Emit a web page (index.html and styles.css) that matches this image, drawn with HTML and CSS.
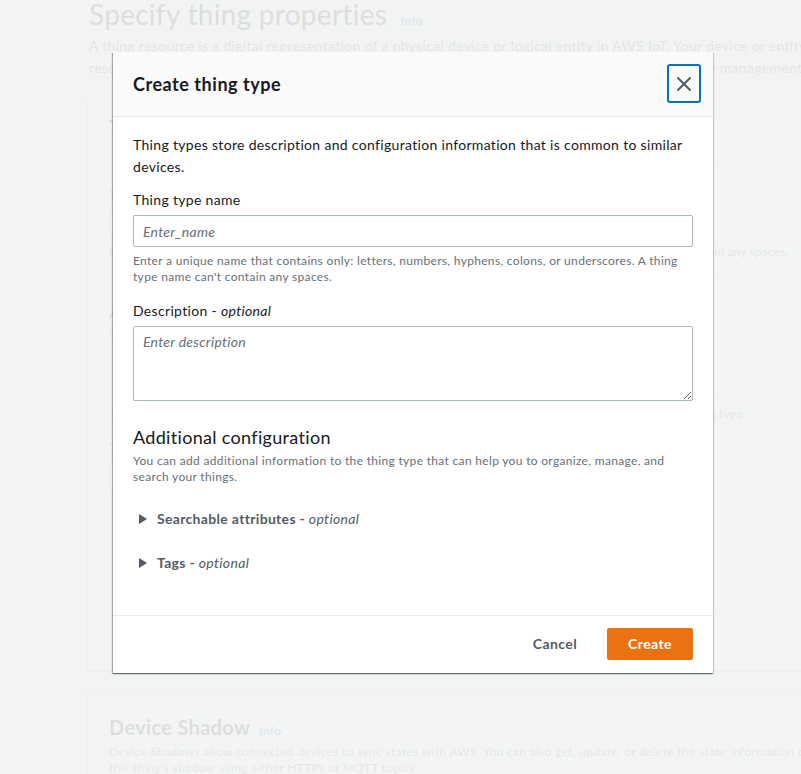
FILE: index.html
```html
<!DOCTYPE html>
<html lang="en">
<head>
<meta charset="utf-8">
<title>Create thing type</title>
<link rel="stylesheet" href="styles.css">
</head>
<body>
<div class="page">
  <h1 class="page-title">Specify thing properties <span class="info info-lg">Info</span></h1>
  <p class="page-desc">A thing resource is a digital representation of a physical device or logical entity in AWS IoT. Your device or entity needs a thing resource in the registry to use AWS IoT features such as Device Shadows, events, jobs, and device management features.</p>

  <div class="card">
    <div class="sec sec-1"><h2 class="sec-title">Thing properties</h2></div>
    <div class="sec sec-2">
      <div class="bg-label">Thing name</div>
      <div class="bg-input"></div>
      <div class="bg-hint">Enter a unique name containing only: letters, numbers, hyphens, colons, or underscores. A thing name can't contain any spaces.</div>
    </div>
    <div class="sec sec-3">
      <h3 class="bg-sub">Additional configurations</h3>
      <div class="bg-hint">You can use these configurations to add detail that can help you to organize, manage, and search your things.</div>
    </div>
    <div class="sec sec-4">
      <div class="bg-hint">Thing types store description and configuration information that is common to all things that have the same thing type.</div>
      <div class="bg-label bg-label-4">Thing type</div>
      <div class="bg-input bg-input-4"></div>
    </div>
  </div>

  <div class="card card-2">
    <h2 class="shadow-title">Device Shadow <span class="info">Info</span></h2>
    <p class="shadow-desc">Device Shadows allow connected devices to sync states with AWS. You can also get, update, or delete the state information of this thing's shadow using either HTTPs or MQTT topics.</p>
  </div>
</div>

<div class="overlay"></div>

<div class="modal" role="dialog" aria-labelledby="modal-title">
  <div class="modal-header">
    <h2 class="modal-title" id="modal-title">Create thing type</h2>
    <button class="close-btn" aria-label="Close">
      <svg width="16" height="16" viewBox="0 0 16 16"><path d="M1.5 1.5l13 13M14.5 1.5l-13 13" stroke="#545b64" stroke-width="2" fill="none"/></svg>
    </button>
  </div>
  <div class="modal-body">
    <p class="intro">Thing types store description and configuration information that is common to similar devices.</p>

    <div class="field">
      <label class="field-label" for="tt-name">Thing type name</label>
      <input class="text-input" id="tt-name" type="text" placeholder="Enter_name">
      <div class="hint">Enter a unique name that contains only: letters, numbers, hyphens, colons, or underscores. A thing type name can't contain any spaces.</div>
    </div>

    <div class="field field-desc">
      <label class="field-label" for="tt-desc">Description - <i>optional</i></label>
      <textarea class="text-area" id="tt-desc" placeholder="Enter description"></textarea>
    </div>

    <h3 class="section-title">Additional configuration</h3>
    <div class="hint hint-section">You can add additional information to the thing type that can help you to organize, manage, and search your things.</div>

    <div class="expander expander-first">
      <svg class="caret" width="8" height="10" viewBox="0 0 8 10"><polygon points="0,0 8,5 0,10" fill="#545b64"/></svg>
      <span class="expander-label">Searchable attributes - <i>optional</i></span>
    </div>
    <div class="expander">
      <svg class="caret" width="8" height="10" viewBox="0 0 8 10"><polygon points="0,0 8,5 0,10" fill="#545b64"/></svg>
      <span class="expander-label">Tags - <i>optional</i></span>
    </div>
  </div>
  <div class="modal-footer">
    <button class="btn btn-link">Cancel</button>
    <button class="btn btn-primary">Create</button>
  </div>
</div>
</body>
</html>
```

FILE: styles.css
```css
* { box-sizing: border-box; }

html, body { margin: 0; padding: 0; }

body {
  width: 801px;
  height: 774px;
  overflow: hidden;
  position: relative;
  background: #f2f3f3;
  color: #16191f;
  font-family: Lato, "Noto Sans", "Liberation Sans", sans-serif;
  letter-spacing: 0.02em;
}

/* ---------- background page ---------- */
.page {
  width: 1300px;
  padding-left: 89px;
}

.page-title {
  margin: 0;
  height: 28px;
  font-size: 28px;
  line-height: 28px;
  font-weight: 400;
  color: #16191f;
  letter-spacing: 0.01em;
}

.info {
  font-size: 12px;
  font-weight: 700;
  color: #0073bb;
  margin-left: 4px;
}
.info-lg { margin-left: 6px; }

.page-desc {
  margin: 7px 0 0;
  height: 44px;
  width: 820px;
  font-size: 14px;
  line-height: 22px;
  color: #545b64;
}

.card {
  margin-top: 21px;
  width: 1200px;
  margin-left: -1px;
  background: #fff;
  border-top: 1px solid #eaeded;
  box-shadow: 0 1px 1px 0 rgba(0, 28, 36, 0.3), -1px 1px 1px 0 rgba(0, 28, 36, 0.15);
}

.sec { padding-left: 21px; border-bottom: 1px solid #eaeded; }
.sec-1 { height: 64px; padding-top: 14px; }
.sec-2 { height: 115px; padding-top: 19px; }
.sec-3 { height: 113px; padding-top: 20px; }
.sec-4 { height: 277px; padding-top: 13px; border-bottom: 0; }

.sec-title { margin: 0; font-size: 18px; line-height: 24px; font-weight: 700; }
.bg-sub { margin: 0; font-size: 18px; line-height: 24px; font-weight: 400; }

.bg-label { font-size: 14px; line-height: 22px; }
.bg-label-4 { margin-top: 15px; }

.bg-input {
  margin-top: 2px;
  width: 560px;
  height: 30px;
  border: 1px solid #aab7b8;
  border-radius: 2px;
  background: #fff;
}
.bg-input-4 { margin-top: 4px; height: 31px; }

.bg-hint {
  margin-top: 6px;
  font-size: 12px;
  line-height: 16px;
  color: #687078;
  white-space: nowrap;
  letter-spacing: 0.01em;
}
.sec-3 .bg-hint { margin-top: 1px; }
.sec-4 .bg-hint { margin-top: 0; }

.card-2 {
  margin-top: 25px;
  height: 200px;
  padding: 17px 0 0 21px;
}

.shadow-title { margin: 0; font-size: 20px; line-height: 28px; font-weight: 700; }
.shadow-desc {
  margin: -1px 0 0;
  width: 710px;
  font-size: 12px;
  line-height: 16px;
  color: #687078;
}

/* ---------- overlay ---------- */
.overlay {
  position: absolute;
  inset: 0;
  background: rgba(242, 243, 243, 0.9);
}

/* ---------- modal ---------- */
.modal {
  position: absolute;
  left: 113px;
  top: 52px;
  width: 600px;
  background: #fff;
  box-shadow: 0 1px 1px 0 rgba(0, 28, 36, 0.3), 1px 1px 1px 0 rgba(0, 28, 36, 0.15), -1px 1px 1px 0 rgba(0, 28, 36, 0.3);
}

.modal-header {
  height: 65px;
  display: flex;
  align-items: center;
  justify-content: space-between;
  padding: 0 12px 1px 20px;
  background: #fafafa;
  border-bottom: 1px solid #eaeded;
}

.modal-title {
  margin: 0;
  font-size: 18px;
  line-height: 22px;
  font-weight: 700;
  color: #16191f;
  letter-spacing: 0.03em;
}

.close-btn {
  width: 34px;
  height: 39px;
  padding: 0;
  display: flex;
  align-items: center;
  justify-content: center;
  background: transparent;
  border: 2px solid #0073bb;
  border-radius: 3px;
}

.modal-body {
  padding: 17px 20px 41px;
}

.intro {
  margin: 0;
  font-size: 14px;
  line-height: 22px;
  color: #16191f;
}

.field { margin-top: 11px; }
.field-desc { margin-top: 15px; }

.field-label {
  display: block;
  font-size: 14px;
  line-height: 22px;
  color: #16191f;
}

.text-input,
.text-area {
  display: block;
  width: 100%;
  margin-top: 4px;
  border: 1px solid #aab7b8;
  border-radius: 2px;
  background: #fff;
  font-family: Lato, "Noto Sans", "Liberation Sans", sans-serif;
  font-size: 14px;
  line-height: 22px;
  letter-spacing: 0.02em;
  color: #16191f;
  outline: none;
}

.text-input { height: 32px; padding: 4px 9px; }
.text-area { height: 75px; padding: 4px 9px; resize: vertical; }

.text-input::placeholder,
.text-area::placeholder {
  color: #687078;
  font-style: italic;
  opacity: 1;
}

.hint {
  margin-top: 6px;
  font-size: 12px;
  line-height: 16px;
  color: #687078;
}

.section-title {
  margin: 24px 0 0;
  font-size: 18px;
  line-height: 24px;
  font-weight: 400;
  color: #16191f;
}

.hint-section { margin-top: 4px; }

.expander {
  display: flex;
  align-items: center;
  height: 22px;
  margin-top: 22px;
}
.expander-first { margin-top: 23px; }

.caret { margin-left: 6px; flex: none; }

.expander-label {
  margin-left: 10px;
  font-size: 14px;
  line-height: 22px;
  font-weight: 700;
  color: #545b64;
}
.expander-label i { font-weight: 400; }

.modal-footer {
  display: flex;
  justify-content: flex-end;
  align-items: center;
  gap: 10px;
  padding: 12px 20px 13px;
  border-top: 1px solid #eaeded;
}

.btn {
  height: 32px;
  font-family: Lato, "Noto Sans", "Liberation Sans", sans-serif;
  font-size: 14px;
  font-weight: 700;
  line-height: 22px;
  letter-spacing: 0.03em;
  border-radius: 2px;
  cursor: pointer;
}

.btn-link {
  padding: 0 20px;
  background: transparent;
  border: 0;
  color: #545b64;
}

.btn-primary {
  padding: 4px 20px;
  background: #ec7211;
  border: 1px solid #ec7211;
  color: #fff;
}
```
